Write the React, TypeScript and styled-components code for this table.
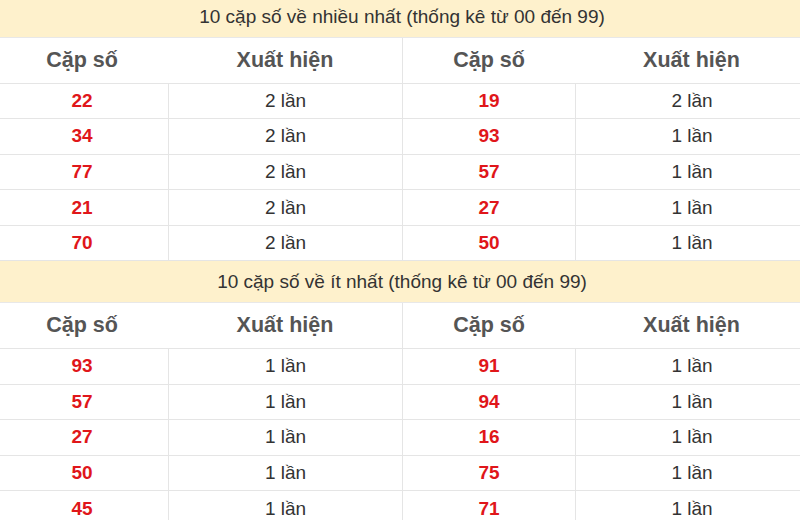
import React from "react";
import styled, { createGlobalStyle } from "styled-components";

const Global = createGlobalStyle`
  html, body { margin: 0; padding: 0; background: #fff; overflow: hidden; }
  body { font-family: "Liberation Sans", Arial, sans-serif; }
`;

const Page = styled.div`
  width: 812px;
  margin: -4px 0 0 -4px;
  display: flex;
  flex-direction: column;
`;

const Title = styled.div`
  height: 42px;
  box-sizing: border-box;
  background: #fef1cc;
  border-bottom: 1px solid #e8e8e8;
  display: flex;
  align-items: center;
  justify-content: center;
  font-size: 19px;
  color: #333;
`;

const Grid = styled.div`
  display: grid;
  grid-template-columns: 172px 234px 173px 233px;
`;

const HeadCell = styled.div<{ $divider?: boolean }>`
  height: 45.5px;
  box-sizing: border-box;
  border-bottom: 1px solid #e5e5e5;
  border-left: ${(p) => (p.$divider ? "1px solid #e5e5e5" : "none")};
  display: flex;
  align-items: center;
  justify-content: center;
  font-size: 21.5px;
  font-weight: bold;
  color: #555;
`;

const Cell = styled.div<{ $divider?: boolean; $num?: boolean }>`
  height: 35.6px;
  box-sizing: border-box;
  border-bottom: 1px solid #e5e5e5;
  border-left: ${(p) => (p.$divider ? "1px solid #e5e5e5" : "none")};
  display: flex;
  align-items: center;
  justify-content: center;
  font-size: 19px;
  font-weight: ${(p) => (p.$num ? "bold" : "normal")};
  color: ${(p) => (p.$num ? "#e0161a" : "#333")};
`;

type Row = [string, string, string, string];

const Table = ({ title, rows }: { title: string; rows: Row[] }) => (
  <>
    <Title>{title}</Title>
    <Grid>
      <HeadCell>Cặp số</HeadCell>
      <HeadCell>Xuất hiện</HeadCell>
      <HeadCell $divider>Cặp số</HeadCell>
      <HeadCell>Xuất hiện</HeadCell>
      {rows.map((r, i) => (
        <React.Fragment key={i}>
          <Cell $num>{r[0]}</Cell>
          <Cell $divider>{r[1]}</Cell>
          <Cell $num $divider>{r[2]}</Cell>
          <Cell $divider>{r[3]}</Cell>
        </React.Fragment>
      ))}
    </Grid>
  </>
);

const most: Row[] = [
  ["22", "2 lần", "19", "2 lần"],
  ["34", "2 lần", "93", "1 lần"],
  ["77", "2 lần", "57", "1 lần"],
  ["21", "2 lần", "27", "1 lần"],
  ["70", "2 lần", "50", "1 lần"],
];

const least: Row[] = [
  ["93", "1 lần", "91", "1 lần"],
  ["57", "1 lần", "94", "1 lần"],
  ["27", "1 lần", "16", "1 lần"],
  ["50", "1 lần", "75", "1 lần"],
  ["45", "1 lần", "71", "1 lần"],
];

export default function App() {
  return (
    <>
      <Global />
      <Page>
        <Table title="10 cặp số về nhiều nhất (thống kê từ 00 đến 99)" rows={most} />
        <Table title="10 cặp số về ít nhất (thống kê từ 00 đến 99)" rows={least} />
      </Page>
    </>
  );
}
